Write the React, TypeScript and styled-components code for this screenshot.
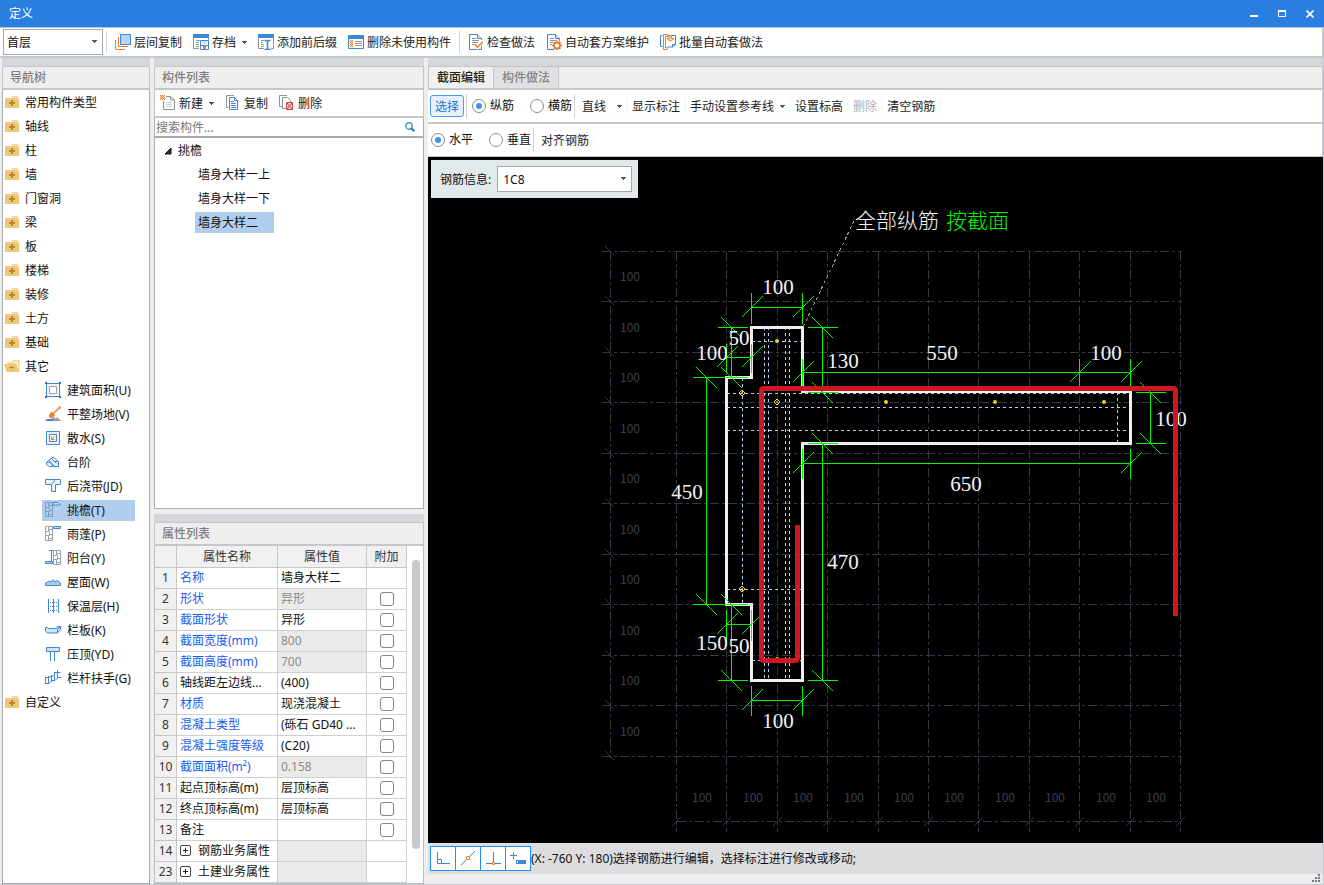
import React, { useState } from 'react';
import styled, { createGlobalStyle } from 'styled-components';

const BLUE = '#3f86d6';
const ORANGE = '#f07e2a';
const GREY = '#8c959e';
const LINE = '#c4c8cd';

const GlobalStyle = createGlobalStyle`
  * { box-sizing: border-box; }
  body {
    margin: 0;
    background: #eeeeee;
    color: #111;
    font: 12px/20px "Noto Sans", "Noto Sans CJK SC", sans-serif;
  }
  button, input, select { font: inherit; color: inherit; margin: 0; }
  button { background: none; border: 0; padding: 0; cursor: pointer; }
  ul { list-style: none; margin: 0; padding: 0; }
  svg { display: block; flex: none; }
`;

/* ---------- window frame ---------- */

const Window = styled.div`
  display: flex;
  flex-direction: column;
  height: 100vh;
  min-height: 600px;
  border-bottom: 1px solid ${LINE};
`;

const TitleBar = styled.header`
  display: flex;
  align-items: center;
  justify-content: space-between;
  height: 28px;
  padding-left: 9px;
  background: #2b7fe1;
  border-bottom: 1px solid #a9c4e6;
  color: #fff;
`;

const WindowTitle = styled.h1`
  margin: 0;
  font-size: 12px;
  font-weight: 400;
`;

const WindowButtons = styled.div`
  display: flex;
`;

const WindowButton = styled.button`
  display: grid;
  place-items: center;
  width: 28px;
  height: 27px;
  padding-top: 1px;
`;

const Toolbar = styled.div`
  display: flex;
  align-items: center;
  gap: 1px;
  height: 30px;
  padding-left: 3px;
  background: #fff;
  border-bottom: 2px solid ${LINE};
  border-right: 2px solid ${LINE};
  white-space: nowrap;
`;

const ToolButton = styled.button<{ $active?: boolean }>`
  display: flex;
  align-items: center;
  gap: 3px;
  height: 22px;
  padding: 2px 4px 0;
  border: 1px solid ${(p) => (p.$active ? '#4a9af0' : '#fafafa')};
  border-radius: 3px;
  background: ${(p) => (p.$active ? '#e6f1fc' : 'transparent')};
  color: ${(p) => (p.$active ? '#1b74d8' : '#222')};
  white-space: nowrap;
  > svg { margin-bottom: 2px; }
  &:disabled { color: #b0b0b0; }
`;

const Separator = styled.span`
  width: 1px;
  height: 22px;
  margin: 0 2px;
  background: #d0d3d8;
`;

const SelectBox = styled.span<{ $width: number }>`
  display: grid;
  align-items: center;
  width: ${(p) => p.$width}px;
  height: 26px;
  > * { grid-area: 1 / 1; }
  > svg { justify-self: end; margin-right: 6px; pointer-events: none; }
`;

const Select = styled.select<{ $inset: number }>`
  appearance: none;
  width: 100%;
  height: 100%;
  padding: 2px ${(p) => p.$inset}px 0;
  border: 1px solid #a8a8a8;
  border-radius: 0;
  background: #fff;
`;

const Body = styled.main`
  display: grid;
  grid-template-columns: 148px 270px minmax(0, 1fr);
  gap: 4px;
  flex: 1;
  min-height: 0;
  padding-left: 2px;
  border-right: 1px solid ${LINE};
`;

/* ---------- dock panels ---------- */

const Panel = styled.section`
  display: flex;
  flex-direction: column;
  min-width: 0;
  min-height: 0;
`;

const DockStrip = styled.div`
  flex: none;
  height: 9px;
  background: #d4d6dc;
  border-bottom: 1px solid ${LINE};
`;

const PanelHeader = styled.h2`
  flex: none;
  height: 23px;
  margin: 0;
  padding-left: 7px;
  background: #eeeeee;
  border: solid ${LINE};
  border-width: 0 1px 2px;
  color: #808080;
  font-size: 12px;
  font-weight: 500;
  line-height: 21px;
`;

const PanelBody = styled.div`
  flex: 1;
  min-height: 0;
  overflow: hidden;
  background: #fff;
  border: solid #a9abae;
  border-width: 0 1px 1px;
`;

const MiddleColumn = styled.div`
  display: grid;
  grid-template-rows: minmax(0, 1fr) 370px;
  gap: 5px;
  min-height: 0;
`;

/* ---------- navigation tree ---------- */

const TreeRow = styled.button`
  display: flex;
  align-items: center;
  gap: 5px;
  width: 100%;
  height: 24px;
  padding: 2px 0 0 1px;
  text-align: left;
  white-space: nowrap;
`;

const SubList = styled.ul<{ $indent: number }>`
  width: fit-content;
  margin-left: ${(p) => p.$indent}px;
`;

const SubItem = styled.li`
  padding: 2px 0 1px;
`;

const SubButton = styled.button<{ $selected: boolean }>`
  display: flex;
  align-items: center;
  gap: 6px;
  width: 100%;
  height: 21px;
  padding: 0 4px 0 3px;
  background: ${(p) => (p.$selected ? '#b1cdee' : 'transparent')};
  text-align: left;
  white-space: nowrap;
  > svg { margin-bottom: 1px; }
`;

/* ---------- component list ---------- */

const ListToolbar = styled.div`
  display: flex;
  align-items: center;
  gap: 1px;
  height: 28px;
  background: #fff;
  border: solid ${LINE};
  border-width: 0 1px 2px;
  flex: none;
`;

const SearchRow = styled.div`
  display: flex;
  align-items: center;
  flex: none;
  height: 20px;
  padding-right: 8px;
  background: #fff;
  border: solid #a9abae;
  border-width: 0 1px 2px;
`;

const SearchInput = styled.input`
  flex: 1;
  min-width: 0;
  height: 18px;
  padding: 1px 1px 0;
  border: 0;
  outline: 0;
  background: none;
  &::placeholder { color: #777; opacity: 1; }
`;

const RootRow = styled(TreeRow)`
  gap: 6px;
  padding-left: 9px;
`;

/* ---------- property table ---------- */

const TableArea = styled.div`
  display: flex;
  flex: 1;
  min-height: 0;
  overflow: hidden;
  background: #fff;
  border: solid #b9bcc0;
  border-width: 0 1px 1px;
`;

const Table = styled.table`
  flex: none;
  width: 252px;
  table-layout: fixed;
  border-collapse: separate;
  border-spacing: 0;
  height: max-content;
`;

const HeadCell = styled.th<{ $width: number }>`
  width: ${(p) => p.$width}px;
  height: 22px;
  padding: 0;
  background: #f0f0f0;
  border: solid #c6c6c6;
  border-width: 0 1px 1px 0;
  color: #333;
  font-weight: 400;
  line-height: 20px;
`;

const NumberCell = styled.th`
  height: 21px;
  padding: 0;
  background: #f0f0f0;
  border: solid #c6c6c6;
  border-width: 0 1px 1px 0;
  color: #333;
  font-weight: 400;
  line-height: 20px;
`;

const Cell = styled.td<{ $tone?: 'link' | 'off' }>`
  height: 21px;
  padding: 0 3px;
  overflow: hidden;
  background: ${(p) => (p.$tone === 'off' ? '#eaeaea' : '#fff')};
  border: solid #cfcfcf;
  border-width: 0 1px 1px 0;
  color: ${(p) => (p.$tone === 'link' ? '#1a5cf0' : p.$tone === 'off' ? '#8a8a8a' : '#111')};
  line-height: 20px;
  text-overflow: ellipsis;
  white-space: nowrap;
`;

const GroupLabel = styled.span`
  display: flex;
  align-items: center;
  gap: 7px;
  > svg { margin-bottom: 1px; }
`;

const CheckBox = styled.input`
  appearance: none;
  display: block;
  width: 14px;
  height: 14px;
  margin: 0 auto;
  border: 1px solid #858585;
  border-radius: 3px;
  background: #fff;
  &:checked { background: #4a9af0; }
`;

const ScrollTrack = styled.div`
  flex: 1;
  padding: 14px 3px 0 5px;
`;

const ScrollThumb = styled.div`
  width: 8px;
  height: 289px;
  border-radius: 4px;
  background: #c9c9c9;
`;

/* ---------- section editor ---------- */

const TabBar = styled.div`
  display: flex;
  flex: none;
  height: 23px;
  border: solid ${LINE};
  border-width: 0 1px 2px;
`;

const Tab = styled.button<{ $active: boolean }>`
  padding: 0 8px;
  background: ${(p) => (p.$active ? '#f0f0f0' : '#e0e0e0')};
  border-right: 1px solid ${LINE};
  color: ${(p) => (p.$active ? '#222' : '#858585')};
  font-weight: 500;
`;

const EditorBar = styled.div<{ $last?: boolean }>`
  display: flex;
  align-items: center;
  flex: none;
  height: ${(p) => (p.$last ? 33 : 34)}px;
  padding-left: 2px;
  background: #fff;
  border-bottom: ${(p) => (p.$last ? 1 : 2)}px solid ${LINE};
  border-right: 1px solid ${LINE};
  white-space: nowrap;
`;

const BarSeparator = styled.span`
  width: 1px;
  height: 24px;
  margin: 0 2px;
  background: #d0d3d8;
`;

const RadioLabel = styled.label`
  display: flex;
  align-items: center;
  gap: 4px;
  & + & { margin-left: 16px; }
`;

const Radio = styled.input`
  appearance: none;
  display: grid;
  place-items: center;
  width: 14px;
  height: 14px;
  border: 1px solid #8a8a8a;
  border-radius: 50%;
  background: #fff;
  &:checked::after {
    content: '';
    width: 6px;
    height: 6px;
    border-radius: 50%;
    background: #3b92f2;
  }
`;

const RadioGroup = styled.div`
  display: flex;
  padding-left: 1px;
  ${BarSeparator} + & { padding-left: 3px; }
`;

const ButtonGroup = styled.div`
  display: flex;
`;

const Canvas = styled.div`
  position: relative;
  flex: 1;
  min-height: 0;
  overflow: hidden;
  background: #000;
`;

const RebarForm = styled.div`
  position: absolute;
  top: 3px;
  left: 3px;
  display: flex;
  align-items: center;
  gap: 6px;
  height: 38px;
  padding: 0 6px 0 9px;
  background: #e1e9eb;
  > label { padding-top: 2px; }
`;

const StatusBar = styled.footer`
  display: flex;
  align-items: center;
  flex: none;
  height: 31px;
  padding-left: 2px;
  background: #dddddf;
  white-space: nowrap;
`;

const SnapButton = styled.button`
  display: grid;
  place-items: center;
  width: 26px;
  height: 25px;
  padding-bottom: 1px;
  border: 1px solid #1e90ff;
  background: #fff;
  & + & { margin-left: -1px; }
`;

const Footer = styled.div`
  display: flex;
  justify-content: flex-end;
  align-items: flex-end;
  flex: none;
  height: 10px;
  padding: 0 2px 1px;
`;

/* ---------- icons ---------- */

const Icon = ({ children, size = 16 }: { children: React.ReactNode; size?: number }) => (
  <svg width={size} height={size} viewBox={`0 0 ${size} ${size}`} fill="none" aria-hidden="true">
    {children}
  </svg>
);

const Caret = () => (
  <svg width="5" height="4" viewBox="0 0 5 4" aria-hidden="true">
    <path d="M0 0h5v1H4v1H3v1H2V2H1V1H0z" fill="#555" />
  </svg>
);

const CaretSlot = styled.span<{ $gap: number }>`
  padding-left: ${(p) => p.$gap}px;
`;

const CopyLayersIcon = () => (
  <Icon>
    <path d="M5.500 .5h10v10h-10z" fill="#b5d5fb" stroke={BLUE} />
    <path d="M3.500 3v9.500H13M.5 6v9.500H10" stroke={ORANGE} />
  </Icon>
);

const TableHead = () => (
  <>
    <path d="M0 0h16v4H0z" fill={BLUE} />
    <path d="M.5 4v10.500H6" stroke={GREY} />
  </>
);

const ArchiveIcon = () => (
  <Icon>
    <TableHead />
    <path d="M3 6.500h4M3 8.500h3M3 10.500h3M3 12.500h3M15.500 4v2" stroke={GREY} />
    <path d="M7.500 6.500h8v9h-8z" fill="#fff" stroke={BLUE} />
    <path d="M9 7h5v3H9z" fill="#cfe2f8" />
    <path d="M10 12h3v3h-3z" fill={ORANGE} />
    <path d="M8 11.500h7" stroke={BLUE} />
  </Icon>
);

const AffixIcon = () => (
  <Icon>
    <TableHead />
    <path d="M3 6.500h3M3 8.500h2M3 10.500h3M3 12.500h3M15.500 4v10.500H13" stroke={GREY} />
    <path d="M6.500 6.500h2l1 1 1-1h2M9.500 7.500v7M6.500 15.500h2l1-1 1 1h2" stroke={BLUE} strokeWidth="1.600" />
  </Icon>
);

const PurgeIcon = () => (
  <Icon>
    <path d="M.5 1.500h15v13H.5z" fill="#fff" stroke={BLUE} />
    <path d="M0 1h16v4H0z" fill={BLUE} />
    <path d="M7 7.500h7M7 9.500h7M7 11.500h7" stroke={GREY} />
    <path d="M2 6h3v7H2z" fill="#fbd9b8" />
    <path d="M2 6.500h1M4 6.500h1M3 7.500h1M2 8.500h1M4 8.500h1M3 9.500h1M2 10.500h1M4 10.500h1M3 11.500h1M2 12.500h1M4 12.500h1" stroke={ORANGE} />
  </Icon>
);

const Sheet = () => (
  <>
    <path d="M1.500 .5h8l4 4v11h-12z" fill="#fff" stroke={BLUE} />
    <path d="M9.500 .5v4h4" fill="#d6e6fa" stroke={BLUE} />
    <path d="M4 4.500h4M4 6.500h7M4 8.500h6M4 10.500h4" stroke={GREY} />
  </>
);

const CheckMethodIcon = () => (
  <Icon>
    <Sheet />
    <path d="M6.500 10l3 3.200L15 7.500" stroke="#fff" strokeWidth="4" />
    <path d="M6.500 10l3 3.200L14.800 7.800" stroke={ORANGE} strokeWidth="1.600" />
  </Icon>
);

const SchemeIcon = () => (
  <Icon>
    <Sheet />
    <circle cx="11" cy="11.500" r="5" fill="#fff" />
    <circle cx="11" cy="11.500" r="3" stroke={ORANGE} strokeWidth="1.800" />
    <path d="M11 6.500v2M11 14.500v2M6 11.500h2M14 11.500h2M7.500 8l1.300 1.300M13.200 13.700L14.500 15M7.500 15l1.300-1.300M13.200 9.300L14.500 8" stroke={ORANGE} strokeWidth="1.500" />
  </Icon>
);

const BatchIcon = () => (
  <Icon>
    <path d="M2.500 1.500h-2v11h2M12 1.500h3.500v9l-3 2.500H7.500" stroke={BLUE} />
    <path d="M12.500 13v-2.500h3" stroke={BLUE} />
    <path d="M7.500 .5h-4v15h4v-2h-2v-11h2z" fill="#fff" stroke={ORANGE} />
    <path d="M7.500 1.500h4v3h2.500l-3.500 3-3.500-3h2.500v-2h-2z" fill="#fbd2ac" stroke={ORANGE} />
  </Icon>
);

const NewIcon = () => (
  <Icon>
    <path d="M6 1.500h4.500l4 3.500v9.500h-11V6" fill="#fff" stroke={GREY} />
    <path d="M10.500 1.500V5h4" stroke={GREY} />
    <path d="M6 7.500h6M6 9.500h6M6 11.500h6" stroke="#cdd2d8" />
    <path d="M0 0h5v5H0z" fill="#fbd9b8" />
    <path d="M0 .5h1M2 .5h1M4 .5h1M1 1.500h1M3 1.500h1M0 2.500h1M2 2.500h1M4 2.500h1M1 3.500h1M3 3.500h1M0 4.500h1M2 4.500h1M4 4.500h1" stroke={ORANGE} />
  </Icon>
);

const CopyIcon = () => (
  <Icon>
    <path d="M3.500 12.500h-2V.5h7.500" stroke={GREY} />
    <path d="M4.500 2.500h5l3 3v9h-8z" fill="#fff" stroke={BLUE} />
    <path d="M9.500 2.500v3h3M6 6.500h3M6 8.500h5M6 10.500h5M6 12.500h5" stroke={BLUE} />
  </Icon>
);

const DeleteIcon = () => (
  <Icon>
    <path d="M3 11.500H.5V.5H8" stroke={GREY} />
    <path d="M3.500 2.500h5l3 3v8h-8z" fill="#fff" stroke={GREY} />
    <path d="M7.500 7.500h6v7h-6z" fill="#f7c9c9" stroke="#d4454a" />
    <path d="M8 8l5 6M13 8l-5 6" stroke="#d4454a" />
  </Icon>
);

const SearchIcon = () => (
  <Icon size={10}>
    <circle cx="4" cy="4" r="3.200" stroke="#3d9ad6" strokeWidth="1.400" />
    <path d="M6.300 6.300L9.300 9.300" stroke="#2478bd" strokeWidth="2" />
  </Icon>
);

const FolderIcon = () => (
  <Icon>
    <path d="M8.500 1h5l1 1.500h-7z" fill="#efcf8e" />
    <path d="M2 3h12q1 0 1 1v8q0 1-1 1H2q-1 0-1-1V4q0-1 1-1z" fill="#efc778" />
    <path d="M8 5v6M5 8h6" stroke="#bd862a" strokeWidth="2" />
  </Icon>
);

const FolderOpenIcon = () => (
  <Icon>
    <path d="M2 3h6l1-2h6.500v11L12 12z" fill="#f3d69b" />
    <path d="M9.500 3.500h4v7" stroke="#fff" />
    <path d="M0 5h12.500l2.500 8H4q-1.500 0-2-1.500z" fill="#efc778" />
    <path d="M5 8.500h5" stroke="#b98833" strokeWidth="1.500" />
  </Icon>
);

const PlusBoxIcon = () => (
  <Icon size={11}>
    <path d="M2 .5h7q1.500 0 1.500 1.500v7q0 1.500-1.500 1.500H2Q.5 10.500.5 9V2Q.5.5 2 .5z" stroke="#444" />
    <path d="M5.500 3v5M3 5.500h5" stroke="#222" />
  </Icon>
);

const Wall = ({ x = 0, stroke = '#9aa0a8' }: { x?: number; stroke?: string }) => (
  <path
    transform={`translate(${x} 0)`}
    d="M.5 .5h7v14h-7zM3.500 .5v5M3.500 9.500v5M4.500 5.500v4M3.500 3.500h4M.5 5.500h4M4.500 8.500h3M.5 9.500h4M3.500 12.500h4"
    stroke={stroke}
  />
);

const treeIcons: Record<string, React.ReactNode> = {
  area: (
    <Icon>
      <path d="M1.500 1.500h13v13h-13z" fill="#edf4fd" stroke={BLUE} />
      <path d="M4.500 4.500h7v7h-7z" fill="#fff" stroke="#9aa2ab" />
      <path d="M0 0h2v2H0zM14 0h2v2h-2zM0 14h2v2H0zM14 14h2v2h-2z" fill="#3767a6" />
    </Icon>
  ),
  site: (
    <Icon>
      <path d="M4 15l3-3 2-1 2 2 1-2 4 4z" fill="#939ca5" />
      <path d="M0 15l2-2h5l2 2z" fill={BLUE} />
      <path d="M14 .5l2 2M8 8l7-7" stroke={ORANGE} strokeWidth="1.400" />
      <path d="M6.500 5.500l3.500 3.500-2 2.500-3.500.5-.5-3z" fill={ORANGE} />
    </Icon>
  ),
  apron: (
    <Icon>
      <path d="M1.500 1.500h13v13h-13z" fill="#edf4fd" stroke={BLUE} />
      <path d="M4.500 4.500h7v7h-7z" fill="#fff" stroke={BLUE} />
      <path d="M10 6L6.500 9.500M6.500 6.500v3h3" stroke={ORANGE} />
    </Icon>
  ),
  steps: (
    <Icon>
      <path d="M1.500 8.500L7 3.500h2l4.500 4.500v4.500h-9l-3-2z" fill="#edf4fd" stroke={BLUE} />
      <path d="M4 6.500l5.500 5.500M6.500 4.500l5 5M1.500 8.500l3-.5 4 4.500M8.500 7.500h5" stroke={BLUE} />
    </Icon>
  ),
  band: (
    <Icon>
      <path d="M.5 1.500h15v5h-5v7h-4v-7h-6z" fill="#edf4fd" stroke={BLUE} />
      <path d="M6.500 6.500l4-5" stroke={BLUE} />
    </Icon>
  ),
  eave: (
    <Icon>
      <Wall stroke="#7f9ec2" />
      <path d="M8 .5h5l2.500 2.500H8z" fill="#cfe2f8" stroke={BLUE} />
    </Icon>
  ),
  canopy: (
    <Icon>
      <Wall />
      <path d="M8.500 .5h7v2h-7z" fill="#b5d5fb" stroke={BLUE} />
    </Icon>
  ),
  balcony: (
    <Icon>
      <Wall x={8} />
      <path d="M4 .5h4M.5 11.500h7v2h-7z" stroke={BLUE} fill="#b5d5fb" />
      <path d="M6.500 1v10" stroke={BLUE} />
    </Icon>
  ),
  roof: (
    <Icon>
      <path d="M.5 11.500V9l4-2 1.500 1 2-2.500L10 8l2-1.500L15.500 9v2.500z" fill="#a9c8ee" stroke={BLUE} />
    </Icon>
  ),
  insulation: (
    <Icon>
      <path d="M3.500 1v14M8.500 1v14M13.500 1v14" stroke={BLUE} />
      <path d="M5 4.500h9M5 8.500h9M5 12.500h9" stroke={BLUE} strokeDasharray="1 1" />
    </Icon>
  ),
  parapet: (
    <Icon>
      <path d="M.5 5.500h2l1 1h8l1-2h3v3l-3 3.500h-10l-2-2z" fill="#cfe2f8" stroke={BLUE} />
      <path d="M12.500 11V7l3-2" stroke={BLUE} />
    </Icon>
  ),
  coping: (
    <Icon>
      <path d="M1.500 1.500h13v4h-13z" fill="#cfe2f8" stroke={BLUE} />
      <path d="M5.500 6v9M9.500 6v9" stroke={BLUE} />
    </Icon>
  ),
  handrail: (
    <Icon>
      <path d="M.5 7v7M0 7.500h3M3.500 6v8M1 13.500h3l3-3M6.500 5v7M3.500 7.500l5-2M9.500 2v8M7 10.500h3l3-3M12.500 0v8M9.500 2.500h6M12 7.500h4" stroke={BLUE} />
    </Icon>
  ),
};

/* ---------- data ---------- */

const folders = ['常用构件类型', '轴线', '柱', '墙', '门窗洞', '梁', '板', '楼梯', '装修', '土方', '基础'];

const otherTypes: [string, string][] = [
  ['area', '建筑面积(U)'],
  ['site', '平整场地(V)'],
  ['apron', '散水(S)'],
  ['steps', '台阶'],
  ['band', '后浇带(JD)'],
  ['eave', '挑檐(T)'],
  ['canopy', '雨蓬(P)'],
  ['balcony', '阳台(Y)'],
  ['roof', '屋面(W)'],
  ['insulation', '保温层(H)'],
  ['parapet', '栏板(K)'],
  ['coping', '压顶(YD)'],
  ['handrail', '栏杆扶手(G)'],
];

const components = ['墙身大样一上', '墙身大样一下', '墙身大样二'];

type Property = { no: number; name: string; value: string; link?: boolean; off?: boolean; group?: boolean; check?: boolean };

const properties: Property[] = [
  { no: 1, name: '名称', value: '墙身大样二', link: true },
  { no: 2, name: '形状', value: '异形', link: true, off: true, check: true },
  { no: 3, name: '截面形状', value: '异形', link: true, check: true },
  { no: 4, name: '截面宽度(mm)', value: '800', link: true, off: true, check: true },
  { no: 5, name: '截面高度(mm)', value: '700', link: true, off: true, check: true },
  { no: 6, name: '轴线距左边线...', value: '(400)', check: true },
  { no: 7, name: '材质', value: '现浇混凝土', link: true, check: true },
  { no: 8, name: '混凝土类型', value: '(砾石 GD40 ...', link: true, check: true },
  { no: 9, name: '混凝土强度等级', value: '(C20)', link: true, check: true },
  { no: 10, name: '截面面积(m²)', value: '0.158', link: true, off: true, check: true },
  { no: 11, name: '起点顶标高(m)', value: '层顶标高', check: true },
  { no: 12, name: '终点顶标高(m)', value: '层顶标高', check: true },
  { no: 13, name: '备注', value: '', check: true },
  { no: 14, name: '钢筋业务属性', value: '', off: true, group: true },
  { no: 23, name: '土建业务属性', value: '', off: true, group: true },
];

/* ---------- section drawing ---------- */

const gridX = [676, 726, 777, 827, 878, 928, 978, 1029, 1079, 1130, 1180];
const gridY = [251, 301, 352, 402, 453, 503, 554, 604, 655, 705, 756];

/* Horizontal dimension: line height, stops along it, and the span of its extension lines. */
const hDims = [
  { y: 307, xs: [751, 802], from: 292, to: 323 },
  { y: 357, xs: [726, 751], from: 343, to: 372 },
  { y: 372, xs: [802, 1079, 1130], from: 358, to: 387 },
  { y: 463, xs: [802, 1130], from: 448, to: 478 },
  { y: 624, xs: [726, 751], from: 609, to: 640 },
  { y: 700, xs: [751, 802], from: 685, to: 715 },
];

const vDims = [
  { x: 731, ys: [327, 377], from: 717, to: 747 },
  { x: 706, ys: [377, 604], from: 692, to: 747 },
  { x: 822, ys: [327, 392], from: 807, to: 837 },
  { x: 1150, ys: [392, 443], from: 1135, to: 1165 },
  { x: 822, ys: [443, 680], from: 807, to: 837 },
  { x: 731, ys: [604, 680], from: 717, to: 747 },
];

const dimTexts: [number, number, string][] = [
  [778, 294, '100'],
  [739, 345, '50'],
  [712, 360, '100'],
  [843, 368, '130'],
  [942, 360, '550'],
  [1106, 360, '100'],
  [1171, 426, '100'],
  [687, 499, '450'],
  [966, 491, '650'],
  [843, 569, '470'],
  [712, 650, '150'],
  [739, 653, '50'],
  [778, 728, '100'],
];

const SectionDrawing = () => (
  <svg width="100%" height="100%" role="img" aria-label="挑檐截面">
    <g transform="translate(-428 -157)" fill="none">
      <g stroke="#303844" strokeDasharray="9 3 3 3" transform="translate(.5 .5)" shapeRendering="crispEdges">
        {gridX.map((x) => <path key={x} d={`M${x} 251V831`} />)}
        {gridY.map((y) => <path key={y} d={`M601 ${y}H1181`} />)}
        <path d="M610 251V757M676 821H1181" />
      </g>
      <g stroke="#303844" shapeRendering="crispEdges">
        {gridY.map((y) => <path key={y} d={`M605 ${y - 5}l9 9`} />)}
        {gridX.map((x) => <path key={x} d={`M${x - 4} 826l9 -9`} />)}
      </g>
      <g fill="#38414d" fontFamily="'Noto Sans CJK SC', sans-serif" fontSize="12" textAnchor="middle">
        {gridY.slice(1).map((y) => <text key={y} x="630" y={y - 20}>100</text>)}
        {gridX.slice(1).map((x) => <text key={x} x={x - 24} y="802">100</text>)}
      </g>

      <path
        d="M751.500 327.500H802.500V391.500H1130.500V443.500H802.500V680.500H751.500V604.500H726.500V377.500H751.500z"
        stroke="#f0f0f0"
        strokeWidth="3"
      />
      <path
        d="M764.500 327V680M768.500 327V680M785.500 327V680M789.500 327V680M742.500 378V604M1117.500 392V443M752 341.500H802M727 393.500H1130M727 407.500H1130M727 430.500H1130M727 589.500H802M752 660.500H802"
        stroke="#b4d2f5"
        strokeDasharray="3 3"
      />

      <g stroke="#00f800" transform="translate(.5 .5)" shapeRendering="crispEdges">
        {hDims.map((d) => (
          <g key={d.y}>
            <path d={`M${d.xs[0]} ${d.y}H${d.xs[d.xs.length - 1]}`} />
            {d.xs.map((x) => <path key={x} d={`M${x} ${d.from}V${d.to}M${x - 10} ${d.y + 10}l21 -21`} />)}
          </g>
        ))}
        {vDims.map((d) => (
          <g key={`${d.x}-${d.ys[0]}`}>
            <path d={`M${d.x} ${d.ys[0]}V${d.ys[1]}`} />
            {d.ys.map((y) => <path key={y} d={`M${d.from} ${y}H${d.to}M${d.x - 10} ${y - 10}l21 21`} />)}
          </g>
        ))}
      </g>

      <path d="M854 221L803 327" stroke="#a0a0a0" strokeDasharray="3 3" shapeRendering="crispEdges" />

      <g stroke="#ffe030">
        {[[742, 393], [777, 402], [742, 589]].map(([x, y]) => (
          <path key={`${x}-${y}`} d={`M${x} ${y - 3}l3 3l-3 3l-3 -3zM${x - 1} ${y}h2`} />
        ))}
      </g>
      <g fill="#f0d020">
        {[[777, 341], [886, 402], [995, 402], [1104, 402], [777, 659]].map(([x, y]) => (
          <circle key={`${x}-${y}`} cx={x} cy={y} r="2" />
        ))}
      </g>

      <g fill="#f4f4f4" fontFamily="'Liberation Serif', serif" fontSize="21" textAnchor="middle">
        {dimTexts.map(([x, y, label]) => <text key={`${x}-${y}`} x={x} y={y}>{label}</text>)}
      </g>
      <g fontFamily="'Noto Sans CJK SC', sans-serif" fontWeight="300" fontSize="21">
        <text x="855" y="228" fill="#f4f4f4">全部纵筋</text>
        <text x="946" y="228" fill="#00f800">按截面</text>
      </g>

      <path
        d="M1175.500 616V390.500q0-2-2-2H763.500q-2 0-2 2V657.500q0 3 3 3H794.500q3 0 3-3V525"
        stroke="#cc181e"
        strokeWidth="5"
        strokeLinejoin="round"
      />
    </g>
  </svg>
);

/* ---------- page ---------- */

const MainToolbar = () => (
  <Toolbar>
    <SelectBox $width={100}>
      <Select $inset={3} aria-label="楼层" defaultValue="首层">
        <option>首层</option>
      </Select>
      <Caret />
    </SelectBox>
    <Separator />
    <ToolButton><CopyLayersIcon />层间复制</ToolButton>
    <ToolButton><ArchiveIcon />存档<CaretSlot $gap={3}><Caret /></CaretSlot></ToolButton>
    <ToolButton><AffixIcon />添加前后缀</ToolButton>
    <ToolButton><PurgeIcon />删除未使用构件</ToolButton>
    <Separator />
    <ToolButton><CheckMethodIcon />检查做法</ToolButton>
    <ToolButton><SchemeIcon />自动套方案维护</ToolButton>
    <ToolButton><BatchIcon />批量自动套做法</ToolButton>
  </Toolbar>
);

const NavigationTree = () => {
  const [selected, setSelected] = useState('eave');
  return (
    <Panel>
      <DockStrip />
      <PanelHeader>导航树</PanelHeader>
      <PanelBody>
        <ul>
          {folders.map((name) => (
            <li key={name}><TreeRow><FolderIcon />{name}</TreeRow></li>
          ))}
          <li>
            <TreeRow><FolderOpenIcon />其它</TreeRow>
            <SubList $indent={39}>
              {otherTypes.map(([id, name]) => (
                <SubItem key={id}>
                  <SubButton $selected={id === selected} onClick={() => setSelected(id)}>
                    {treeIcons[id]}
                    {name}
                  </SubButton>
                </SubItem>
              ))}
            </SubList>
          </li>
          <li><TreeRow><FolderIcon />自定义</TreeRow></li>
        </ul>
      </PanelBody>
    </Panel>
  );
};

const ComponentList = () => {
  const [selected, setSelected] = useState('墙身大样二');
  return (
    <Panel>
      <DockStrip />
      <PanelHeader>构件列表</PanelHeader>
      <ListToolbar>
        <ToolButton><NewIcon />新建<CaretSlot $gap={3}><Caret /></CaretSlot></ToolButton>
        <ToolButton><CopyIcon />复制</ToolButton>
        <ToolButton><DeleteIcon />删除</ToolButton>
      </ListToolbar>
      <SearchRow>
        <SearchInput type="text" aria-label="搜索构件" placeholder="搜索构件..." />
        <SearchIcon />
      </SearchRow>
      <PanelBody>
        <RootRow>
          <Icon size={8}><path d="M7 1v6H1z" fill="#333" stroke="#111" /></Icon>
          挑檐
        </RootRow>
        <SubList $indent={40}>
          {components.map((name) => (
            <SubItem key={name}>
              <SubButton $selected={name === selected} onClick={() => setSelected(name)}>{name}</SubButton>
            </SubItem>
          ))}
        </SubList>
      </PanelBody>
    </Panel>
  );
};

const PropertyList = () => (
  <Panel>
    <DockStrip />
    <PanelHeader>属性列表</PanelHeader>
    <TableArea>
      <Table>
        <thead>
          <tr>
            <HeadCell $width={22} aria-label="序号" />
            <HeadCell $width={101}>属性名称</HeadCell>
            <HeadCell $width={89}>属性值</HeadCell>
            <HeadCell $width={40}>附加</HeadCell>
          </tr>
        </thead>
        <tbody>
          {properties.map((p) => (
            <tr key={p.no}>
              <NumberCell scope="row">{p.no}</NumberCell>
              <Cell $tone={p.link ? 'link' : undefined}>
                {p.group ? <GroupLabel><PlusBoxIcon />{p.name}</GroupLabel> : p.name}
              </Cell>
              <Cell $tone={p.off ? 'off' : undefined}>{p.value}</Cell>
              <Cell>{p.check && <CheckBox type="checkbox" aria-label={`附加 ${p.name}`} />}</Cell>
            </tr>
          ))}
        </tbody>
      </Table>
      <ScrollTrack><ScrollThumb /></ScrollTrack>
    </TableArea>
  </Panel>
);

const SectionEditor = () => (
  <Panel>
    <DockStrip />
    <TabBar role="tablist">
      <Tab role="tab" aria-selected="true" $active>截面编辑</Tab>
      <Tab role="tab" aria-selected="false" $active={false}>构件做法</Tab>
    </TabBar>
    <EditorBar>
      <ToolButton $active>选择</ToolButton>
      <BarSeparator />
      <RadioGroup>
        <RadioLabel><Radio type="radio" name="rebar" defaultChecked />纵筋</RadioLabel>
        <RadioLabel><Radio type="radio" name="rebar" />横筋</RadioLabel>
      </RadioGroup>
      <BarSeparator />
      <ButtonGroup>
        <ToolButton>直线<CaretSlot $gap={8}><Caret /></CaretSlot></ToolButton>
        <ToolButton>显示标注</ToolButton>
        <ToolButton>手动设置参考线<CaretSlot $gap={3}><Caret /></CaretSlot></ToolButton>
        <ToolButton>设置标高</ToolButton>
        <ToolButton disabled>删除</ToolButton>
        <ToolButton>清空钢筋</ToolButton>
      </ButtonGroup>
    </EditorBar>
    <EditorBar $last>
      <RadioGroup>
        <RadioLabel><Radio type="radio" name="align" defaultChecked />水平</RadioLabel>
        <RadioLabel><Radio type="radio" name="align" />垂直</RadioLabel>
      </RadioGroup>
      <BarSeparator />
      <ButtonGroup>
        <ToolButton>对齐钢筋</ToolButton>
      </ButtonGroup>
    </EditorBar>
    <Canvas>
      <SectionDrawing />
      <RebarForm>
        <label htmlFor="rebar-info">钢筋信息:</label>
        <SelectBox $width={135}>
          <Select $inset={5} id="rebar-info" defaultValue="1C8">
            <option>1C8</option>
          </Select>
          <Caret />
        </SelectBox>
      </RebarForm>
    </Canvas>
    <StatusBar>
      <SnapButton aria-label="正交">
        <Icon><path d="M2.500 2v11.500H15M2.500 9.500h4v4" stroke={BLUE} /></Icon>
      </SnapButton>
      <SnapButton aria-label="中点捕捉">
        <Icon>
          <path d="M1 15L15 1" stroke={BLUE} />
          <path d="M6.500 6.500h3v3h-3z" fill="#fff" stroke={ORANGE} />
        </Icon>
      </SnapButton>
      <SnapButton aria-label="垂点捕捉">
        <Icon>
          <path d="M8.500 2v11M1 13.500h15" stroke={BLUE} />
          <path d="M7.500 12.500h2v2h-2z" fill="#fff" stroke={ORANGE} />
        </Icon>
      </SnapButton>
      <SnapButton aria-label="动态输入">
        <Icon>
          <path d="M3.500 2v7M0 5.500h7" stroke={BLUE} />
          <path d="M6 10h10v4H6z" fill={BLUE} />
          <path d="M7.500 11v2" stroke="#fff" />
        </Icon>
      </SnapButton>
      <span>(X: -760 Y: 180)选择钢筋进行编辑，选择标注进行修改或移动;</span>
    </StatusBar>
    <Footer>
      <Icon size={9}>
        <path d="M6 1h2M3 4h2M6 4h2M0 7h2M3 7h2M6 7h2" stroke="#777" strokeWidth="2" />
      </Icon>
    </Footer>
  </Panel>
);

export default function App() {
  return (
    <>
      <GlobalStyle />
      <Window>
        <TitleBar>
          <WindowTitle>定义</WindowTitle>
          <WindowButtons>
            <WindowButton aria-label="最小化"><Icon size={8}><path d="M0 6h8" stroke="#fff" strokeWidth="2" /></Icon></WindowButton>
            <WindowButton aria-label="最大化"><Icon size={8}><path d="M.5 1v5.500h7V1" stroke="#fff" /><path d="M0 1h8" stroke="#fff" strokeWidth="2" /></Icon></WindowButton>
            <WindowButton aria-label="关闭"><Icon size={8}><path d="M.5 .5l7 7M7.500 .5l-7 7" stroke="#fff" strokeWidth="1.600" /></Icon></WindowButton>
          </WindowButtons>
        </TitleBar>
        <MainToolbar />
        <Body>
          <NavigationTree />
          <MiddleColumn>
            <ComponentList />
            <PropertyList />
          </MiddleColumn>
          <SectionEditor />
        </Body>
      </Window>
    </>
  );
}
